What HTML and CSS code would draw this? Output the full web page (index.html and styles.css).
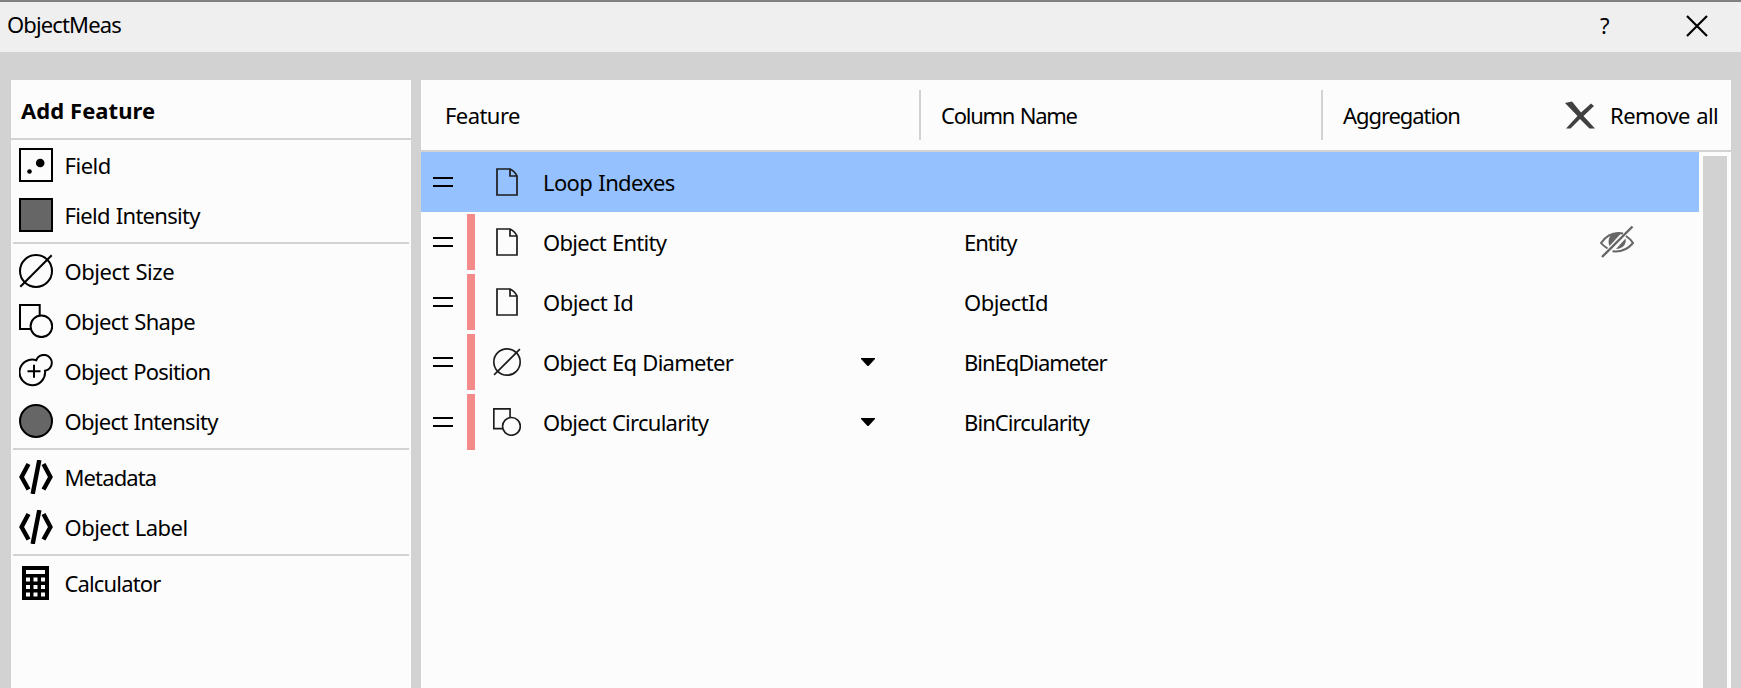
FILE: index.html
```html
<!DOCTYPE html>
<html lang="en">
<head>
<meta charset="utf-8">
<title>ObjectMeas</title>
<link rel="stylesheet" href="styles.css">
</head>
<body>
<svg class="defs" width="0" height="0">
  <symbol id="size" viewBox="0 0 34 34"><g fill="none" stroke="currentColor" stroke-width="2"><circle cx="17" cy="17" r="16"/><path d="M1.3 32.7 32.7 1.3"/></g></symbol>
  <symbol id="shape" viewBox="0 0 34 34"><g fill="none" stroke="currentColor" stroke-width="2"><path d="M12 25H1V1h19.7v11"/><circle cx="22.4" cy="22.3" r="10.8"/></g></symbol>
  <symbol id="code" viewBox="0 0 34 34"><g fill="none" stroke="currentColor" stroke-width="4.400"><path d="M9.500 4 2.600 17l6.900 12.500M24.500 4l6.900 13-6.900 12.500M20.300 0 13.700 34"/></g></symbol>
  <symbol id="file" viewBox="0 0 28 28"><path d="M4 1h13q5 2.500 7 7v19H4zM17 1v7h7" fill="none" stroke="currentColor" stroke-width="1.700"/></symbol>
</svg>
<div class="window">
  <header class="titlebar">
    <span class="title">ObjectMeas</span>
    <span class="help">?</span>
    <svg class="close" width="22" height="22" viewBox="0 0 22 22"><path d="M1 1l20 20M21 1 1 21" fill="none" stroke="#000" stroke-width="2.200"/></svg>
  </header>
  <main class="content">
    <aside class="sidebar">
      <h1 class="heading">Add Feature</h1>
      <div class="group">
        <div class="item"><svg class="icon" viewBox="0 0 34 34"><rect x="1" y="1" width="32" height="32" fill="#fcfcfc" stroke="#000" stroke-width="2"/><circle cx="21.200" cy="15" r="4.300"/><circle cx="10.500" cy="23.500" r="2.300"/></svg><span class="label s47">Field</span></div>
        <div class="item"><svg class="icon" viewBox="0 0 34 34"><rect x="1" y="1" width="32" height="32" fill="#666" stroke="#000" stroke-width="2"/></svg><span class="label s70">Field Intensity</span></div>
      </div>
      <div class="group">
        <div class="item"><svg class="icon"><use href="#size"/></svg><span class="label s44">Object Size</span></div>
        <div class="item"><svg class="icon"><use href="#shape"/></svg><span class="label s62">Object Shape</span></div>
        <div class="item"><svg class="icon" viewBox="0 0 34 34"><path d="M17.300 6.200A8 8 0 1 1 26 16.800 12.800 12.800 0 1 1 17.300 6.200zM8.500 17.200h13M15 10.700v13" fill="none" stroke="#000" stroke-width="2"/></svg><span class="label s77">Object Position</span></div>
        <div class="item"><svg class="icon" viewBox="0 0 34 34"><circle cx="17" cy="17" r="16" fill="#666" stroke="#000" stroke-width="2"/></svg><span class="label s70">Object Intensity</span></div>
      </div>
      <div class="group">
        <div class="item"><svg class="icon"><use href="#code"/></svg><span class="label s88">Metadata</span></div>
        <div class="item"><svg class="icon"><use href="#code"/></svg><span class="label s53">Object Label</span></div>
      </div>
      <div class="group">
        <div class="item"><svg class="icon" viewBox="0 0 34 34"><path d="M3 0h27v34H3z"/><path fill="#fcfcfc" d="M7 4h19v4H7zM7 11.500h4v4H7zM14.500 11.500h4v4h-4zM22 11.500h4v4h-4zM7 19h4v4H7zM14.500 19h4v4h-4zM22 19h4v4h-4zM7 26.500h4v4H7zM14.500 26.500h4v4h-4zM22 26.500h4v4h-4z"/></svg><span class="label s85">Calculator</span></div>
      </div>
    </aside>
    <section class="table">
      <div class="thead">
        <div class="th th-feature"><span class="s56">Feature</span></div>
        <div class="th th-column"><span class="s124">Column Name</span></div>
        <div class="th th-aggregation"><span class="s107">Aggregation</span></div>
        <div class="remove"><svg width="30" height="28" viewBox="0 0 30 28"><path fill="#404040" d="M0 2 7 0.500 16 11.500 26 2.500 29 5 18.500 15 30 27.500h-5.500L15 18 5.500 27.500H1L12.500 15z"/></svg><span class="s53">Remove all</span></div>
      </div>
      <div class="tbody">
        <div class="rows">
          <div class="row selected"><i class="grip"></i><i class="mark none"></i><svg class="ficon"><use href="#file"/></svg><span class="name s62">Loop Indexes</span></div>
          <div class="row"><i class="grip"></i><i class="mark"></i><svg class="ficon"><use href="#file"/></svg><span class="name s72">Object Entity</span><span class="column s104">Entity</span>
            <svg class="hidden-eye" width="36" height="34" viewBox="0 0 36 34"><g fill="none" stroke="#666" stroke-width="2"><path d="M8.500 23.500Q4 20.500 2 18 9 8 19.500 8q2.500 0 4.500.5M27 11q4.500 3 7 7-7 8.500-17.500 8.500l-3-.3"/><path d="M33.500 1.500 3 32" stroke-width="2.400"/></g><path fill="#666" d="M10.500 21c-2-5-.5-10 3.500-12.500q5-1.500 8.500-.500zM17 24l9.500-10.500c1.500 5-2.500 10.500-9.500 10.500z"/></svg></div>
          <div class="row"><i class="grip"></i><i class="mark"></i><svg class="ficon"><use href="#file"/></svg><span class="name s53">Object Id</span><span class="column s54">ObjectId</span></div>
          <div class="row"><i class="grip"></i><i class="mark"></i><svg class="ficon"><use href="#size"/></svg><span class="name s72">Object Eq Diameter</span><svg class="caret" width="14" height="8" viewBox="0 0 14 8"><path d="M0 0h14v1L7.500 8h-1L0 1z"/></svg><span class="column s102">BinEqDiameter</span></div>
          <div class="row"><i class="grip"></i><i class="mark"></i><svg class="ficon"><use href="#shape"/></svg><span class="name s73">Object Circularity</span><svg class="caret" width="14" height="8" viewBox="0 0 14 8"><path d="M0 0h14v1L7.500 8h-1L0 1z"/></svg><span class="column s92">BinCircularity</span></div>
        </div>
        <div class="scrollbar"></div>
      </div>
    </section>
  </main>
</div>
</body>
</html>
```
FILE: styles.css
```css
* { box-sizing: border-box; }
body { margin: 0; font: 22px/30px "Noto Sans", "DejaVu Sans", sans-serif; color: #000; word-spacing: 1px; overflow: hidden; }
svg { display: block; flex: none; }
.defs { position: absolute; }
.window { height: 688px; display: flex; flex-direction: column; background: #d2d2d2; }
.titlebar { height: 52px; flex: none; border-top: 2px solid #808080; background: #efefef; display: flex; align-items: center; padding: 0 33px 2px 7px; }
.title { flex: 1; letter-spacing: -.87px; padding-bottom: 4px; }
.help { width: 86px; padding-bottom: 2px; }
.content { flex: 1; min-height: 0; display: flex; gap: 10px; padding: 28px 10px 0 11px; }

.sidebar { width: 400px; background: #fcfcfc; }
.heading { margin: 0; height: 60px; padding: 15px 10px 0; border-bottom: 2px solid #d2d2d2; font-size: 22px; line-height: 30px; font-weight: 700; word-spacing: 0; letter-spacing: .06px; }
.group { margin: 0 2px 2px; padding-bottom: 2px; border-bottom: 2px solid #d2d2d2; }
.group:last-child { border-bottom: 0; }
.item { height: 50px; display: flex; align-items: center; gap: 11.5px; padding-left: 6px; white-space: nowrap; }
.icon { width: 34px; height: 34px; }

.table { flex: 1; background: #fcfcfc; display: flex; flex-direction: column; }
.thead { height: 72px; flex: none; display: flex; align-items: center; border-bottom: 2px solid #d2d2d2; padding-right: 11px; }
.th { height: 50px; display: flex; align-items: center; }
.th-feature { width: 498px; padding-left: 24px; }
.th-column { width: 402px; padding-left: 20px; border-left: 2px solid #d2d2d2; }
.th-aggregation { flex: 1; padding-left: 20px; border-left: 2px solid #d2d2d2; }
.remove { width: 155px; display: flex; align-items: center; gap: 15px; white-space: nowrap; }
.tbody { flex: 1; display: flex; padding-right: 4px; }
.rows { flex: 1; }
.scrollbar { width: 24px; margin: 4px 0 0 4px; background: #d2d2d2; }
.row { height: 60px; display: grid; grid-template-columns: 34px 8px 28px 358px 14px 1fr 36px; align-items: center; padding: 0 64px 0 12px; white-space: nowrap; }
.selected { background: #95c1fe; }
.grip { grid-column: 1; width: 20px; height: 10px; border: solid #000; border-width: 2px 0; }
.mark { grid-column: 2; height: 56px; background: #f38b8b; }
.mark.none { background: none; }
.ficon { grid-column: 3; width: 28px; height: 28px; margin-left: 18px; color: #1c1c1c; }
.name { grid-column: 4; padding-left: 40px; }
.caret { grid-column: 5; }
.column { grid-column: 6; padding-left: 89px; }
.hidden-eye { grid-column: 7; }

/* Letter spacing steps, in hundredths of a pixel */
.s44 { letter-spacing: -.44px; }
.s47 { letter-spacing: -.47px; }
.s53 { letter-spacing: -.53px; }
.s54 { letter-spacing: -.54px; }
.s56 { letter-spacing: -.56px; }
.s62 { letter-spacing: -.62px; }
.s70 { letter-spacing: -.7px; }
.s72 { letter-spacing: -.72px; }
.s73 { letter-spacing: -.73px; }
.s77 { letter-spacing: -.77px; }
.s85 { letter-spacing: -.85px; }
.s88 { letter-spacing: -.88px; }
.s92 { letter-spacing: -.92px; }
.s102 { letter-spacing: -1.02px; }
.s104 { letter-spacing: -1.04px; }
.s107 { letter-spacing: -1.07px; }
.s124 { letter-spacing: -1.24px; }
```
